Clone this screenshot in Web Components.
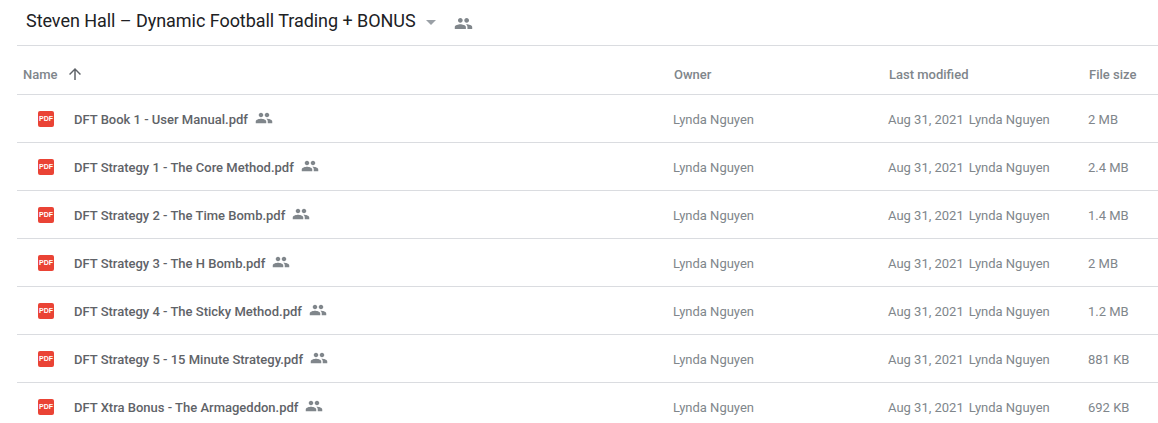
<!DOCTYPE html>
<html>
<head>
<meta charset="utf-8">
<title>Steven Hall – Dynamic Football Trading + BONUS</title>
<style>
  html, body { margin: 0; padding: 0; background: #fff; overflow: hidden; }
  body { font-family: Roboto, "Liberation Sans", sans-serif; }
</style>
</head>
<body>
<drive-folder>
  <drive-title slot="title">Steven Hall – Dynamic Football Trading + BONUS</drive-title>
  <drive-head slot="head"></drive-head>
  <drive-row name="DFT Book 1 - User Manual.pdf" size="2 MB"></drive-row>
  <drive-row name="DFT Strategy 1 - The Core Method.pdf" size="2.4 MB"></drive-row>
  <drive-row name="DFT Strategy 2 - The Time Bomb.pdf" size="1.4 MB"></drive-row>
  <drive-row name="DFT Strategy 3 - The H Bomb.pdf" size="2 MB"></drive-row>
  <drive-row name="DFT Strategy 4 - The Sticky Method.pdf" size="1.2 MB"></drive-row>
  <drive-row name="DFT Strategy 5 - 15 Minute Strategy.pdf" size="881 KB"></drive-row>
  <drive-row name="DFT Xtra Bonus - The Armageddon.pdf" size="692 KB"></drive-row>
</drive-folder>

<script>
// people icon, same one in the title and in the rows
const peopleSvg = `<svg width="24" height="24" viewBox="0 0 24 24" fill="currentColor"><path d="M16 11c1.66 0 2.99-1.34 2.99-3S17.66 5 16 5s-3 1.34-3 3 1.34 3 3 3zm-8 0c1.66 0 2.99-1.34 2.99-3S9.66 5 8 5 5 6.34 5 8s1.34 3 3 3zm0 2c-2.33 0-7 1.17-7 3.5V19h14v-2.5C15 14.17 10.33 13 8 13zm8 0c-.29 0-.62.02-.97.05 1.16.84 1.97 1.97 1.97 3.45V19h6v-2.5c0-2.33-4.67-3.5-7-3.5z"/></svg>`

class DriveFolder extends HTMLElement {
  constructor() {
    super()
    this.attachShadow({ mode: 'open' }).innerHTML = `
      <style>
        :host { display: block; height: 423px; overflow: hidden; padding-left: 17px; }
      </style>
      <slot name="title"></slot>
      <slot name="head"></slot>
      <slot></slot>`
  }
}

class DriveTitle extends HTMLElement {
  constructor() {
    super()
    this.attachShadow({ mode: 'open' }).innerHTML = `
      <style>
        :host { display: flex; align-items: center; height: 45px; border-bottom: 1px solid #dadce0; padding-left: 9px; }
        .text { font: 400 18px Roboto, sans-serif; color: #202124; white-space: nowrap; letter-spacing: -0.05px; padding-bottom: 4px; }
        .caret { width: 0; height: 0; margin: 0 0 1px 10px; border: 5px solid transparent; border-top-color: #9aa0a6; border-bottom: 0; }
        .people { display: flex; margin: 1px 0 0 18px; color: #80868b; }
        svg { width: 19px; height: 19px; display: block; }
      </style>
      <span class="text"><slot></slot></span>
      <span class="caret"></span>
      <span class="people">${peopleSvg}</span>`
  }
}

class DriveHead extends HTMLElement {
  constructor() {
    super()
    this.attachShadow({ mode: 'open' }).innerHTML = `
      <style>
        :host { display: grid; grid-template-columns: 657px 215px 200px 1fr; align-items: center; height: 48px;
          border-bottom: 1px solid #dadce0; font: 500 13px Roboto, sans-serif; color: #80868b; }
        span { padding-top: 9px; }
        .name { display: flex; align-items: center; padding-left: 6px; }
        svg { margin: -2px 0 0 8px; display: block; }
      </style>
      <span class="name">Name
        <svg width="18" height="18" viewBox="0 0 24 24" fill="#5f6368"><path d="M4 12l1.41 1.41L11 7.83V20h2V7.83l5.58 5.59L20 12l-8-8-8 8z"/></svg>
      </span>
      <span>Owner</span>
      <span>Last modified</span>
      <span>File size</span>`
  }
}

const rowTemplate = document.createElement('template')
rowTemplate.innerHTML = `
  <style>
    :host { display: grid; grid-template-columns: 656px 215px 200px 1fr; align-items: center; height: 47px;
      border-bottom: 1px solid #dadce0; font: 400 13px Roboto, sans-serif; color: #80868b; }
    .name { display: flex; align-items: center; padding-left: 21px; font-weight: 500; color: #5f6368; }
    .pdf { width: 16px; height: 16px; margin-right: 20px; border-radius: 2px; background: #ea4335; color: #fff;
      font: 700 7px/16px "Liberation Sans", sans-serif; text-align: center; }
    .file, .cell { padding-top: 2px; }
    .people { display: flex; margin: -1px 0 0 7px; color: #80868b; }
    .people svg { width: 18px; height: 18px; display: block; }
    .date { display: flex; gap: 5px; }
  </style>
  <span class="name"><span class="pdf">PDF</span><span class="file"></span><span class="people">${peopleSvg}</span></span>
  <span class="cell">Lynda Nguyen</span>
  <span class="date cell"><span>Aug 31, 2021</span><span>Lynda Nguyen</span></span>
  <span class="size cell"></span>`

class DriveRow extends HTMLElement {
  constructor() {
    super()
    const shadowRoot = this.attachShadow({ mode: 'open' })
    shadowRoot.appendChild(rowTemplate.content.cloneNode(true))
  }
  connectedCallback() {
    this.shadowRoot.querySelector('.file').textContent = this.getAttribute('name')
    this.shadowRoot.querySelector('.size').textContent = this.getAttribute('size')
  }
}

customElements.define('drive-folder', DriveFolder)
customElements.define('drive-title', DriveTitle)
customElements.define('drive-head', DriveHead)
customElements.define('drive-row', DriveRow)
</script>
</body>
</html>
